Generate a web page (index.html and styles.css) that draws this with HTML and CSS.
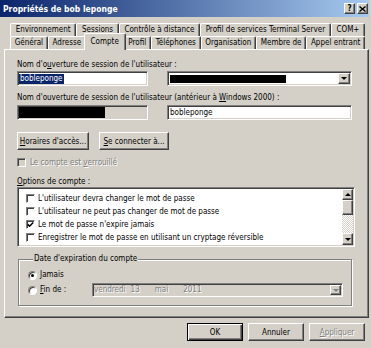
FILE: index.html
```html
<!DOCTYPE html>
<html lang="fr">
<head>
  <meta charset="UTF-8">
  <title>Propriétés de bob leponge</title>
  <link rel="stylesheet" href="styles.css">
</head>
<body>

<div class="window">

  <!-- Title bar -->
  <div class="titlebar">
    <span class="title">Propriétés de bob leponge</span>
    <div class="title-btns">
      <span class="tbtn">?</span>
      <span class="tbtn">
        <svg width="7" height="6" viewBox="0 0 7 6"><path d="M0.5 0.5 L6.5 5.5 M6.5 0.5 L0.5 5.5" stroke="#000" stroke-width="1.4"/></svg>
      </span>
    </div>
  </div>

  <!-- Tabs -->
  <div class="tabs">
    <div class="tab-row">
      <div class="tab">Environnement</div>
      <div class="tab">Sessions</div>
      <div class="tab">Contrôle à distance</div>
      <div class="tab">Profil de services Terminal Server</div>
      <div class="tab">COM+</div>
    </div>
    <div class="tab-row">
      <div class="tab">Général</div>
      <div class="tab">Adresse</div>
      <div class="tab active">Compte</div>
      <div class="tab">Profil</div>
      <div class="tab">Téléphones</div>
      <div class="tab">Organisation</div>
      <div class="tab">Membre de</div>
      <div class="tab">Appel entrant</div>
    </div>
  </div>

  <!-- Compte page -->
  <div class="panel">
    <div class="label">Nom d'o<u>u</u>verture de session de l'utilisateur :</div>
    <div class="field-row">
      <div class="field"><span class="selected">bobleponge</span></div>
      <div class="field combo">
        <span class="redact"></span>
        <span class="drop"><i class="arrow-down"></i></span>
      </div>
    </div>

    <div class="label label-2">Nom d'ouverture de session de l'utilisateur (antérieur à <u>W</u>indows 2000) :</div>
    <div class="field-row">
      <div class="field gray"><span class="redact short"></span></div>
      <div class="field">bobleponge</div>
    </div>

    <div class="btn-row">
      <div class="btn btn-hours"><span><u>H</u>oraires d'accès...</span></div>
      <div class="btn btn-connect"><span><u>S</u>e connecter à...</span></div>
    </div>

    <div class="check-row disabled">
      <span class="checkbox gray"></span>
      <span>Le compte est <u>v</u>errouillé</span>
    </div>

    <div class="label label-options"><u>O</u>ptions de compte :</div>
    <div class="listbox">
      <div class="lb-items">
        <div class="lb-item"><span class="checkbox"></span>L'utilisateur devra changer le mot de passe</div>
        <div class="lb-item"><span class="checkbox"></span>L'utilisateur ne peut pas changer de mot de passe</div>
        <div class="lb-item">
          <span class="checkbox"><svg width="7" height="7" viewBox="0 0 7 7"><path d="M0.8 3.4 L2.6 5.2 L6.2 1.4" fill="none" stroke="#000" stroke-width="1.5"/></svg></span>
          Le mot de passe n'expire jamais
        </div>
        <div class="lb-item"><span class="checkbox"></span>Enregistrer le mot de passe en utilisant un cryptage réversible</div>
      </div>
      <div class="scrollbar">
        <div class="sb-btn"><i class="arrow-up"></i></div>
        <div class="sb-thumb"></div>
        <div class="sb-track"></div>
        <div class="sb-btn sb-down"><i class="arrow-down"></i></div>
      </div>
    </div>

    <fieldset class="expire">
      <legend>Date d'expiration du compte</legend>
      <div class="radio-row">
        <span class="radio on"></span>
        <span><u>J</u>amais</span>
      </div>
      <div class="radio-row row-date">
        <span class="radio"></span>
        <span><u>F</u>in de :</span>
        <div class="field gray date">
          <span class="d-day">vendredi</span>
          <span class="d-num">13</span>
          <span class="d-month">mai</span>
          <span>2011</span>
          <span class="drop date-drop"><i class="arrow-down grey"></i></span>
        </div>
      </div>
    </fieldset>
  </div>

  <!-- Dialog buttons -->
  <div class="footer">
    <div class="btn btn-foot default">OK</div>
    <div class="btn btn-foot">Annuler</div>
    <div class="btn btn-foot disabled"><span><u>A</u>ppliquer</span></div>
  </div>

</div>

</body>
</html>
```

FILE: styles.css
```css
body {
  margin: 0;
  font-family: "DejaVu Sans Condensed", "Liberation Sans", Arial, sans-serif;
  font-size: 8px;
  color: #000;
  background: #D4D0C8;
}
.window {
  width: 371px;
  height: 348px;
  box-sizing: border-box;
  padding-right: 2px;
  overflow: hidden;
}
u {
  text-underline-offset: 1px;
}

/* title bar */
.titlebar {
  height: 17px;
  display: flex;
  align-items: center;
  justify-content: space-between;
  padding: 0 1px 0 3px;
  background: linear-gradient(to right, #0A246A, #A6CAF0);
}
.title {
  color: #fff;
  font-weight: bold;
  font-size: 8.5px;
}
.title-btns {
  display: flex;
  gap: 2px;
}
.tbtn {
  width: 11px;
  height: 11px;
  box-sizing: border-box;
  display: flex;
  align-items: center;
  justify-content: center;
  font-weight: bold;
  font-size: 8px;
  background: #D4D0C8;
  border: 1px solid;
  border-color: #fff #404040 #404040 #fff;
  box-shadow: inset -1px -1px #808080;
}

/* tabs */
.tabs {
  padding: 6px 4px 0 10px;
}
.tab-row {
  display: flex;
  height: 13px;
}
.tab {
  flex: 1 1 auto;
  height: 13px;
  box-sizing: border-box;
  padding: 0 3px;
  text-align: center;
  line-height: 11px;
  white-space: nowrap;
  border: 1px solid;
  border-bottom: 0;
  border-color: #fff #404040 #fff #fff;
  border-radius: 2px 2px 0 0;
  box-shadow: inset -1px 0 #808080;
}
.tab.active {
  position: relative;
  z-index: 1;
  align-self: flex-start;
  height: 17px;
  margin: -3px -2px 0;
  padding: 2px 5px 0;
  background: #D4D0C8;
}

/* panel */
.panel {
  height: 269px;
  margin-left: 4px;
  box-sizing: border-box;
  padding: 10px 13px 0 12px;
  border: 1px solid;
  border-color: #fff #404040 #404040 #fff;
  box-shadow: inset -1px -1px #808080;
}
.label {
  line-height: 10px;
  white-space: nowrap;
}
.label-2 {
  margin-top: 7px;
}
.field-row {
  display: grid;
  grid-template-columns: 131px 185px;
  column-gap: 19px;
  margin-top: 1px;
}
.label-2 + .field-row {
  margin-top: 2px;
}
.field {
  height: 15px;
  box-sizing: border-box;
  display: flex;
  align-items: center;
  padding-left: 2px;
  background: #fff;
  white-space: nowrap;
  border: 1px solid;
  border-color: #808080 #fff #fff #808080;
  box-shadow: inset 1px 1px #404040, inset -1px -1px #D4D0C8;
}
.field.gray {
  background: #D4D0C8;
  padding-left: 1px;
}
.selected {
  margin-left: -1px;
  padding: 0 1px;
  line-height: 10px;
  background: #0A246A;
  color: #fff;
}
.combo {
  justify-content: space-between;
  padding-right: 1px;
}
.redact {
  width: 116px;
  height: 8px;
  background: #000;
}
.redact.short {
  width: 86px;
  height: 11px;
}
.drop {
  width: 12px;
  height: 11px;
  box-sizing: border-box;
  display: flex;
  align-items: center;
  justify-content: center;
  background: #D4D0C8;
  border: 1px solid;
  border-color: #fff #404040 #404040 #fff;
  box-shadow: inset -1px -1px #808080;
}
.arrow-down {
  width: 0;
  height: 0;
  border-left: 3px solid transparent;
  border-right: 3px solid transparent;
  border-top: 3px solid #000;
}
.arrow-down.grey {
  border-top-color: #808080;
}
.arrow-up {
  width: 0;
  height: 0;
  border-left: 3px solid transparent;
  border-right: 3px solid transparent;
  border-bottom: 3px solid #000;
}

/* buttons */
.btn-row {
  display: flex;
  gap: 10px;
  margin-top: 12px;
}
.btn {
  height: 18px;
  box-sizing: border-box;
  display: flex;
  align-items: center;
  justify-content: center;
  white-space: nowrap;
  background: #D4D0C8;
  border: 1px solid;
  border-color: #fff #404040 #404040 #fff;
  box-shadow: inset -1px -1px #808080;
}
.btn-hours {
  width: 72px;
}
.btn-connect {
  width: 70px;
}
.btn.default {
  border-color: #000;
  box-shadow: inset 1px 1px #fff, inset -1px -1px #404040, inset -2px -2px #808080;
}
.disabled {
  color: #808080;
  text-shadow: 1px 1px #fff;
}

/* checkboxes */
.check-row {
  display: flex;
  align-items: center;
  gap: 4px;
  height: 10px;
  margin-top: 7px;
  white-space: nowrap;
}
.checkbox {
  width: 9px;
  height: 9px;
  flex: none;
  box-sizing: border-box;
  display: flex;
  align-items: center;
  justify-content: center;
  background: #fff;
  border: 1px solid;
  border-color: #808080 #fff #fff #808080;
  box-shadow: inset 1px 1px #404040;
}
.checkbox.gray {
  background: #D4D0C8;
  text-shadow: none;
}
.label-options {
  margin-top: 10px;
}

/* list of options */
.listbox {
  height: 60px;
  box-sizing: border-box;
  display: flex;
  padding: 1px;
  background: #fff;
  border: 1px solid;
  border-color: #808080 #fff #fff #808080;
  box-shadow: inset 1px 1px #404040, inset -1px -1px #D4D0C8;
}
.lb-items {
  flex: 1;
  padding: 3px 0 0 7px;
  overflow: hidden;
}
.lb-item {
  display: flex;
  align-items: center;
  gap: 3px;
  height: 13px;
  white-space: nowrap;
}
.scrollbar {
  width: 11px;
  display: flex;
  flex-direction: column;
}
.sb-btn, .sb-thumb {
  box-sizing: border-box;
  display: flex;
  align-items: center;
  justify-content: center;
  background: #D4D0C8;
  border: 1px solid;
  border-color: #fff #404040 #404040 #fff;
  box-shadow: inset -1px -1px #808080;
}
.sb-btn {
  height: 11px;
}
.sb-down {
  height: 12px;
}
.sb-thumb {
  height: 15px;
}
.sb-track {
  flex: 1;
  background: repeating-conic-gradient(#fff 0 25%, #D4D0C8 0 50%) 0 0 / 2px 2px;
}

/* expiration group */
.expire {
  margin: 7px 3px 0 1px;
  padding: 6px 8px 8px 9px;
  border: 1px solid #808080;
  box-shadow: inset 1px 1px #fff, 1px 1px #fff;
  min-width: 0;
}
.expire legend {
  margin-left: 5px;
  padding: 0 1px;
  line-height: 10px;
  background: #D4D0C8;
}
.radio-row {
  display: grid;
  grid-template-columns: 12px 52px 1fr;
  align-items: center;
  line-height: 10px;
}
.row-date {
  margin-top: 3px;
}
.radio {
  width: 9px;
  height: 9px;
  box-sizing: border-box;
  display: flex;
  align-items: center;
  justify-content: center;
  border-radius: 50%;
  background: #fff;
  border: 1px solid;
  border-color: #808080 #fff #fff #808080;
  box-shadow: inset 1px 1px #404040;
}
.radio.on::after {
  content: "";
  width: 3px;
  height: 3px;
  border-radius: 50%;
  background: #000;
}
.date {
  height: 14px;
  padding-left: 4px;
  padding-right: 1px;
  color: #808080;
  text-shadow: 1px 1px #fff;
}
.d-day {
  margin-right: 5px;
}
.d-num, .d-month {
  margin-right: 15px;
}
.date-drop {
  width: 11px;
  height: 10px;
  margin-left: auto;
}

/* dialog buttons */
.footer {
  display: flex;
  justify-content: flex-end;
  gap: 5px;
  padding: 5px 4px 0 0;
}
.btn-foot {
  width: 56px;
}
```
